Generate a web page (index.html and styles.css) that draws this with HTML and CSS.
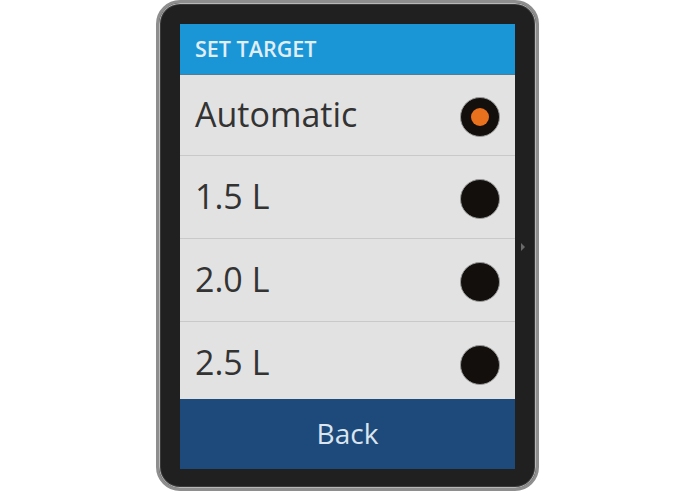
FILE: index.html
```html
<!DOCTYPE html>
<html>
<head>
<meta charset="utf-8">
<link rel="stylesheet" href="styles.css">
</head>
<body>
<div class="device">
  <div class="screen">
    <div class="header">SET TARGET</div>
    <div class="list">
      <div class="row first"><span class="label">Automatic</span><span class="radio checked"></span></div>
      <div class="row"><span class="label">1.5 L</span><span class="radio"></span></div>
      <div class="row"><span class="label">2.0 L</span><span class="radio"></span></div>
      <div class="row"><span class="label">2.5 L</span><span class="radio"></span></div>
    </div>
    <div class="back">Back</div>
  </div>
  <span class="arrow"></span>
</div>
</body>
</html>
```
FILE: styles.css
```css
html, body {
  margin: 0;
  padding: 0;
  background: #ffffff;
  font-family: "Open Sans", "Noto Sans", sans-serif;
}
body {
  display: flex;
  justify-content: center;
  width: 695px;
  height: 494px;
  overflow: hidden;
}
.device {
  position: relative;
  box-sizing: border-box;
  width: 383px;
  height: 491px;
  border: 3px solid #8e8e8e;
  border-radius: 24px;
  background: #202020;
  box-shadow: inset 0 0 0 1px #b8b8b8, inset 0 0 0 2px #3a3a3a;
  padding: 21px 21px 19px 21px;
}
.screen {
  display: flex;
  flex-direction: column;
  height: 100%;
  background: #e2e2e2;
}
.header {
  flex: none;
  box-sizing: border-box;
  height: 51px;
  background: #1a96d6;
  border-bottom: 1px solid #4f7e98;
  color: #e2eef6;
  font-size: 21.5px;
  font-weight: 600;
  padding-left: 15px;
  padding-bottom: 2px;
  display: flex;
  align-items: center;
}
.list {
  flex: 1;
  overflow: hidden;
  display: flex;
  flex-direction: column;
}
.row {
  flex: none;
  height: 83px;
  box-sizing: border-box;
  border-bottom: 1px solid #c9c9c9;
  display: flex;
  align-items: center;
  justify-content: space-between;
  padding: 0 15px 0 15px;
}
.row.first {
  height: 81px;
}
.label {
  font-size: 34px;
  color: #333333;
  padding-bottom: 3px;
}
.radio {
  box-sizing: border-box;
  width: 40px;
  height: 40px;
  border-radius: 50%;
  background: #130f0d;
  border: 1.5px solid #9a9a9a;
  display: flex;
  align-items: center;
  justify-content: center;
  margin-top: 3px;
}
.radio.checked::after {
  content: "";
  width: 18px;
  height: 18px;
  border-radius: 50%;
  background: #e8711e;
}
.back {
  flex: none;
  height: 70px;
  background: #1d4a7a;
  color: #dbe5ef;
  font-size: 28px;
  display: flex;
  align-items: center;
  justify-content: center;
  padding-bottom: 2px;
  box-sizing: border-box;
}
.arrow {
  position: absolute;
  right: 11px;
  top: 240px;
  width: 0;
  height: 0;
  border-top: 4px solid transparent;
  border-bottom: 4px solid transparent;
  border-left: 4px solid #6a6a6a;
}
```
